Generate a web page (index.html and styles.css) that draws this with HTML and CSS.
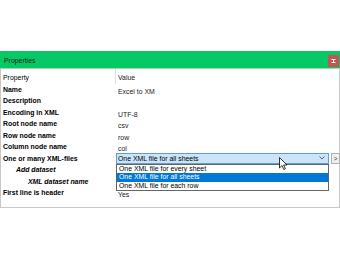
FILE: index.html
```html
<!DOCTYPE html>
<html lang="en">
<head>
    <meta charset="UTF-8">
    <title>Properties</title>
    <link rel="stylesheet" href="styles.css">
</head>
<body>
    <div class="panel">
        <div class="titlebar">
            <span class="title">Properties</span>
            <span class="close">
                <svg width="5" height="4" viewBox="0 0 5 4"><path d="M0.5 0.5h4M0.5 3.5h4M2.5 0.5v3" stroke="#fff" stroke-width="1" fill="none"/></svg>
            </span>
        </div>

        <div class="grid">
            <div class="row head">
                <div class="label">Property</div>
                <div class="value">Value</div>
            </div>
            <div class="row"><div class="label">Name</div><div class="value">Excel to XM</div></div>
            <div class="row"><div class="label">Description</div><div class="value"></div></div>
            <div class="row"><div class="label">Encoding in XML</div><div class="value">UTF-8</div></div>
            <div class="row"><div class="label">Root node name</div><div class="value">csv</div></div>
            <div class="row"><div class="label">Row node name</div><div class="value">row</div></div>
            <div class="row"><div class="label">Column node name</div><div class="value">col</div></div>
            <div class="row">
                <div class="label">One or many XML-files</div>
                <div class="value editing">
                    <div class="combo">
                        <span>One XML file for all sheets</span>
                        <svg class="chev" width="6" height="4" viewBox="0 0 6 4"><path d="M0.5 0.5l2.5 2.5 2.5-2.5" stroke="#555" stroke-width="0.9" fill="none"/></svg>
                        <!-- dropdown list (open) -->
                        <ul class="options">
                            <li>One XML file for every sheet</li>
                            <li class="selected">One XML file for all sheets</li>
                            <li>One XML file for each row</li>
                        </ul>
                        <svg class="cursor" width="9" height="13" viewBox="0 0 9 13"><path d="M0.5 0.5v10.5l2.5-2.4 1.8 3.9 1.6-0.7-1.8-3.8h3.4z" fill="#fff" stroke="#000" stroke-width="0.8"/></svg>
                    </div>
                    <div class="more">&gt;</div>
                </div>
            </div>
            <div class="row"><div class="label sub1">Add dataset</div><div class="value"></div></div>
            <div class="row"><div class="label sub2">XML dataset name</div><div class="value"></div></div>
            <div class="row"><div class="label">First line is header</div><div class="value">Yes</div></div>
        </div>
    </div>
</body>
</html>
```

FILE: styles.css
```css
body {
    margin: 0;
    padding-top: 51px;
    background: #fff;
    font-family: "Liberation Sans", Arial, sans-serif;
    font-size: 6.9px;
    color: #000;
}
.panel {
    width: 340px;
    height: 157px;
    box-sizing: border-box;
    border: 1px solid #c8c8c8;
    border-top: none;
}
.titlebar {
    height: 17px;
    background-color: #06c864;
    border-bottom: 1px solid #9ad9b4;
    display: flex;
    align-items: center;
    justify-content: space-between;
    padding: 0 1px 0 4px;
    margin: 0 -1px;
}
.title {
    color: #1c1c1c;
    padding-top: 2px;
}
.close {
    width: 11px;
    height: 12px;
    margin-top: 3px;
    background-color: #c75454;
    display: flex;
    align-items: center;
    justify-content: center;
}
.grid {
    padding-top: 3px;
}
.row {
    display: grid;
    grid-template-columns: 115px 1fr;
    height: 11.5px;
    line-height: 11.5px;
}
.label {
    font-weight: bold;
    padding-left: 2px;
    white-space: nowrap;
}
.value {
    padding-left: 2px;
    padding-top: 2px;
    color: #222;
}
.head .label {
    font-weight: normal;
    border-right: 1px solid #e0e0e0;
    margin-top: -3px;
    padding-top: 3px;
}
.head .value {
    padding-top: 0;
}
.sub1 {
    font-style: italic;
    padding-left: 15px;
}
.sub2 {
    font-style: italic;
    padding-left: 27px;
}
.editing {
    display: flex;
    gap: 2px;
    padding: 0;
}
.combo {
    position: relative;
    width: 210px;
    height: 9px;
    line-height: 9px;
    background-color: #cce4f7;
    border: 1px solid #5b9fe0;
    color: #000;
    display: flex;
    align-items: center;
    justify-content: space-between;
    padding-left: 1px;
}
.chev {
    margin-right: 3px;
}
.more {
    width: 7px;
    height: 9px;
    line-height: 9px;
    border: 1px solid #b0b0b0;
    background-color: #f0f0f0;
    text-align: center;
    color: #444;
}
.options {
    position: absolute;
    left: -1px;
    top: 10px;
    width: 211px;
    margin: 0;
    padding: 0;
    list-style: none;
    background: #fff;
    border: 1px solid #646464;
}
.options li {
    height: 8.5px;
    line-height: 8.5px;
    padding-left: 2px;
}
.options .selected {
    background-color: #0078d7;
    color: #fff;
}
.cursor {
    position: absolute;
    left: 162px;
    top: 3px;
}
```
